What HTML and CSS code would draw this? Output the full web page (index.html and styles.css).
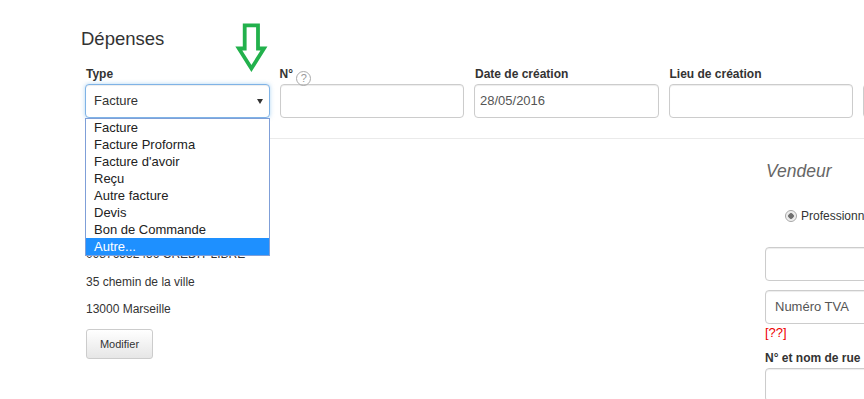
FILE: index.html
```html
<!DOCTYPE html>
<html lang="fr">
<head>
<meta charset="utf-8">
<title>Dépenses</title>
<link rel="stylesheet" href="styles.css">
</head>
<body>
<div class="page">
  <h2 class="title">Dépenses</h2>
  <div class="fields">
    <div class="field">
      <div class="label">Type</div>
      <div class="select focus">Facture<span class="caret"></span></div>
      <ul class="dropdown">
        <li>Facture</li>
        <li>Facture Proforma</li>
        <li>Facture d'avoir</li>
        <li>Reçu</li>
        <li>Autre facture</li>
        <li>Devis</li>
        <li>Bon de Commande</li>
        <li class="selected">Autre...</li>
      </ul>
    </div>
    <div class="field">
      <div class="label nopad">N° <span class="help">?</span></div>
      <div class="input"></div>
    </div>
    <div class="field">
      <div class="label">Date de création</div>
      <div class="input">28/05/2016</div>
    </div>
    <div class="field">
      <div class="label">Lieu de création</div>
      <div class="input"></div>
    </div>
    <div class="field">
      <div class="label">&nbsp;</div>
      <div class="input"></div>
    </div>
  </div>
  <div class="sep"></div>
  <div class="content">
    <div class="left">
      <p class="line">09876532456 CRÉDIT LIBRE</p>
      <p class="line">35 chemin de la ville</p>
      <p class="line">13000 Marseille</p>
      <button class="btn">Modifier</button>
    </div>
    <div class="right">
      <h3 class="subtitle">Vendeur</h3>
      <div class="radio-row"><span class="radio"></span>Professionnel</div>
      <div class="input wide first"></div>
      <div class="input wide second"><span class="placeholder">Numéro TVA</span></div>
      <div class="err">[??]</div>
      <div class="label rue">N° et nom de rue</div>
      <div class="input wide"></div>
    </div>
  </div>
</div>
<svg class="arrow" width="40" height="60" viewBox="230 18 40 60" xmlns="http://www.w3.org/2000/svg">
  <path d="M244.7 25.3 H258 V48.5 H264 L251.4 68.5 L238.8 48.5 H244.7 Z" fill="#fff" stroke="#22b14c" stroke-width="3.8" stroke-linejoin="miter"/>
</svg>
</body>
</html>
```
FILE: styles.css
```css
html, body {
  margin: 0;
  padding: 0;
  background: #fff;
  overflow: hidden;
}
body {
  font-family: "Liberation Sans", Arial, sans-serif;
  color: #333;
  width: 864px;
  height: 399px;
  position: relative;
}
.page {
  padding-left: 80px;
}
.title {
  margin: 0;
  padding-top: 29px;
  font-size: 18.5px;
  line-height: 20px;
  font-weight: normal;
  color: #333;
  padding-left: 1px;
}
.fields {
  margin-top: 17px;
  display: grid;
  grid-template-columns: repeat(5, 194.5px);
}
.field {
  padding: 0 5px;
  position: relative;
}
.label {
  height: 17px;
  line-height: 17px;
  font-size: 12px;
  font-weight: bold;
  margin-bottom: 1px;
  padding-left: 1px;
  white-space: nowrap;
  color: #333;
}
.label.nopad {
  padding-left: 0;
}
.help {
  display: inline-block;
  width: 13px;
  height: 13px;
  border: 1px solid #aaa;
  border-radius: 50%;
  color: #999;
  font-size: 11px;
  font-weight: normal;
  line-height: 13px;
  text-align: center;
  vertical-align: -4px;
  margin-left: 0;
}
.input, .select {
  box-sizing: border-box;
  height: 34px;
  border: 1px solid #ccc;
  border-radius: 4px;
  box-shadow: inset 0 1px 1px rgba(0,0,0,.075);
  font-size: 13px;
  line-height: 32px;
  color: #555;
  padding: 0 5px;
  background: #fff;
  white-space: nowrap;
}
.select {
  position: relative;
  padding-left: 8px;
  color: #333;
}
.select.focus {
  border-color: #7fb3e6;
  box-shadow: inset 0 1px 1px rgba(0,0,0,.075), 0 0 4px rgba(102,175,233,.5);
}
.caret {
  position: absolute;
  right: 6px;
  top: 14px;
  width: 0;
  height: 0;
  border-left: 3px solid transparent;
  border-right: 3px solid transparent;
  border-top: 5px solid #333;
}
.dropdown {
  position: absolute;
  left: 5px;
  right: 5px;
  top: 52px;
  margin: 0;
  padding: 0;
  list-style: none;
  background: #fff;
  border: 1px solid #7f9fd8;
  z-index: 5;
}
.dropdown li {
  font-size: 13px;
  line-height: 17px;
  height: 17px;
  padding: 0 8px;
  color: #222;
  white-space: nowrap;
}
.dropdown li.selected {
  background: #1e90ff;
  color: #fff;
}
.sep {
  margin-top: 20px;
  margin-left: 5px;
  height: 1px;
  background: #eaeaea;
}
.content {
  display: flex;
  padding-left: 6px;
}
.left {
  width: 679px;
  flex: none;
  padding-top: 107px;
}
.line {
  margin: 0 0 10.5px;
  font-size: 12px;
  line-height: 17px;
  color: #333;
  white-space: nowrap;
}
.btn {
  display: block;
  margin-top: 1px;
  box-sizing: border-box;
  width: 67px;
  height: 30px;
  border: 1px solid #ccc;
  border-radius: 3px;
  background: linear-gradient(#fff, #e6e6e6);
  font-family: "Liberation Sans", Arial, sans-serif;
  font-size: 11px;
  color: #333;
  padding: 0;
  text-align: center;
}
.right {
  flex: none;
  width: 220px;
  padding-top: 22px;
}
.subtitle {
  margin: 0;
  font-size: 17.5px;
  line-height: 20px;
  font-style: italic;
  font-weight: normal;
  color: #666;
  padding-left: 1px;
}
.radio-row {
  margin-top: 26.5px;
  padding-left: 20px;
  font-size: 12px;
  line-height: 17px;
  color: #333;
  white-space: nowrap;
  display: flex;
  align-items: center;
}
.radio {
  box-sizing: border-box;
  width: 12px;
  height: 12px;
  border-radius: 50%;
  border: 1px solid #a6a6a6;
  background: radial-gradient(circle, #6f6f6f 0, #6f6f6f 2.5px, #e4e4e4 3px, #f5f5f5 5px);
  margin-right: 4px;
  margin-top: -1px;
}
.wide {
  width: 200px;
}
.first {
  margin-top: 22.5px;
}
.second {
  margin-top: 9px;
  padding-left: 9px;
}
.placeholder {
  color: #555;
}
.err {
  color: #e00;
  font-size: 13px;
  line-height: 17px;
}
.label.rue {
  margin-top: 9px;
  padding-left: 0;
}
.arrow {
  position: absolute;
  left: 230px;
  top: 18px;
}
```
